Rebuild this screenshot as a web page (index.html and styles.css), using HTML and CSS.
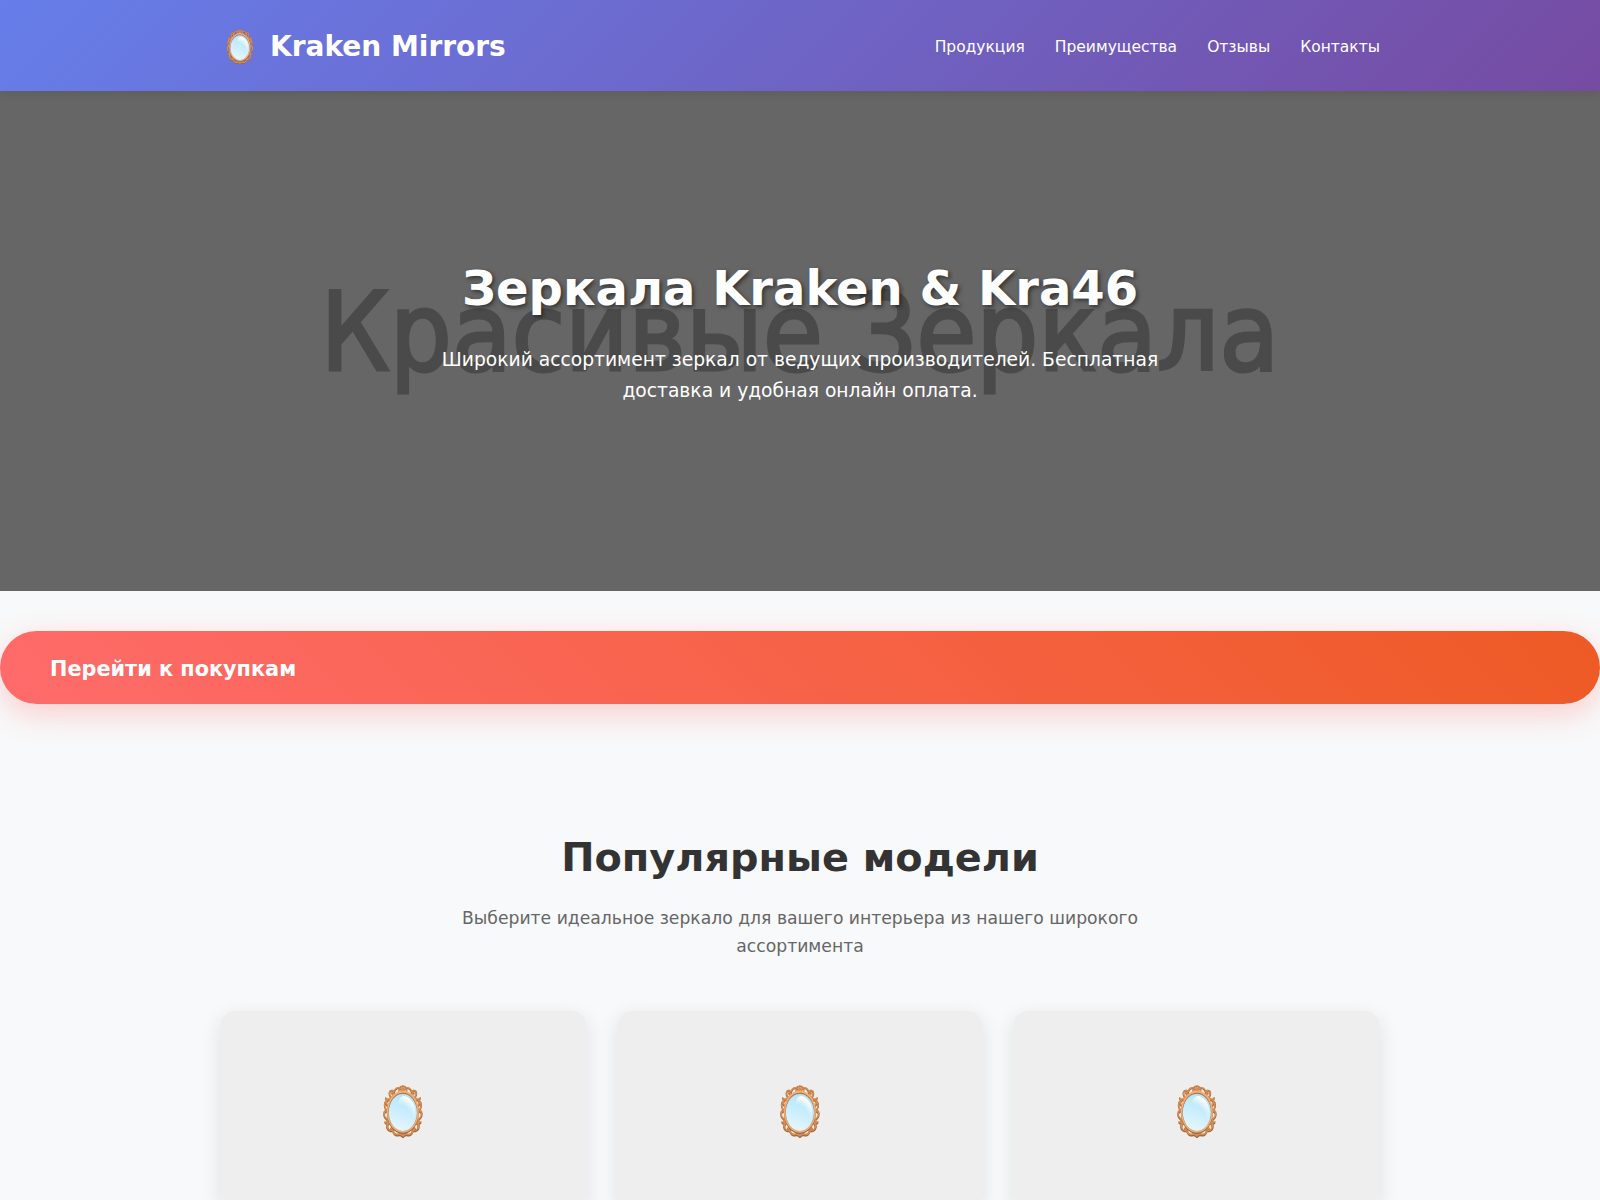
FILE: index.html
```html
<!DOCTYPE html>
<html lang="ru">
<head>
<meta charset="utf-8">
<title>Kraken Mirrors</title>
<link rel="stylesheet" href="styles.css">
</head>
<body>
<header class="header">
  <div class="container header-row">
    <div class="logo"><span class="logo-icon">🪞</span><span class="logo-text">Kraken Mirrors</span></div>
    <nav class="nav">
      <a href="#">Продукция</a>
      <a href="#">Преимущества</a>
      <a href="#">Отзывы</a>
      <a href="#">Контакты</a>
    </nav>
  </div>
</header>
<section class="hero">
  <div class="hero-watermark">Красивые Зеркала</div>
  <div class="hero-content">
    <h1>Зеркала Kraken &amp; Kra46</h1>
    <p>Широкий ассортимент зеркал от ведущих производителей. Бесплатная доставка и удобная онлайн оплата.</p>
  </div>
</section>
<div class="cta-wrap"><a class="cta" href="#">Перейти к покупкам</a></div>
<section class="products">
  <div class="container">
    <h2>Популярные модели</h2>
    <p class="lead">Выберите идеальное зеркало для вашего интерьера из нашего широкого ассортимента</p>
    <div class="grid">
      <div class="card"><div class="card-image">🪞</div></div>
      <div class="card"><div class="card-image">🪞</div></div>
      <div class="card"><div class="card-image">🪞</div></div>
    </div>
  </div>
</section>
</body>
</html>
```
FILE: styles.css
```css
* { margin: 0; padding: 0; box-sizing: border-box; }
body {
  font-family: "DejaVu Sans", sans-serif;
  line-height: 1.6;
  color: #333;
  background: #f8f9fa;
}
.container { max-width: 1200px; margin: 0 auto; padding: 0 20px; }
.header {
  position: relative;
  z-index: 2;
  background: linear-gradient(135deg, #667eea 0%, #764ba2 100%);
  padding: 20px 0;
  box-shadow: 0 2px 10px rgba(0,0,0,.1);
  color: #fff;
}
.header-row { display: flex; justify-content: space-between; align-items: center; height: 51px; }
.logo { display: flex; align-items: center; gap: 10px; font-size: 28px; font-weight: 700; }
.logo-icon { font-size: 32px; line-height: 1; padding-top: 4px; }
.logo-text { padding-top: 4px; }
.nav { display: flex; gap: 30px; padding-top: 3px; }
.nav a { color: #fff; text-decoration: none; font-size: 15.5px; }
.hero {
  position: relative;
  height: 500px;
  background: #666;
  color: #fff;
  display: flex;
  align-items: center;
  justify-content: center;
  text-align: center;
  overflow: hidden;
}
.hero-watermark {
  position: absolute;
  left: 0; right: 0; top: 166px;
  font-family: "DejaVu Sans Condensed", "DejaVu Sans", sans-serif;
  font-size: 108px;
  line-height: 1.4;
  letter-spacing: 0.2px;
  color: #4a4a4a;
  -webkit-text-stroke: 3px #4a4a4a;
}
.hero-content { position: relative; max-width: 800px; padding: 0 20px; }
.hero h1 { font-size: 48px; font-weight: 700; margin-bottom: 18px; text-shadow: 2px 2px 4px rgba(0,0,0,.5); }
.hero p { font-size: 18.7px; line-height: 31px; margin-bottom: 26px; }
.cta-wrap { display: flex; flex-direction: column; margin-top: 40px; }
.cta {
  display: block;
  padding: 22px 50px 18px;
  background: linear-gradient(45deg, #ff6b6b, #ee5a24);
  color: #fff;
  font-size: 20.8px;
  font-weight: 700;
  text-decoration: none;
  border-radius: 50px;
  box-shadow: 0 10px 30px rgba(255,107,107,.3);
}
.products { padding: 121px 0 80px; }
.products h2 { font-size: 39.8px; line-height: 64px; font-weight: 700; text-align: center; margin-bottom: 15px; color: #333; }
.lead { max-width: 700px; margin: 0 auto 50px; font-size: 17.2px; line-height: 28.16px; color: #666; text-align: center; }
.grid { display: grid; grid-template-columns: repeat(3, 1fr); gap: 30px; }
.card { background: #fff; border-radius: 15px; overflow: hidden; box-shadow: 0 5px 20px rgba(0,0,0,.1); }
.card-image { height: 200px; padding-top: 2px; background: #eee; display: flex; align-items: center; justify-content: center; font-size: 48px; }
```
